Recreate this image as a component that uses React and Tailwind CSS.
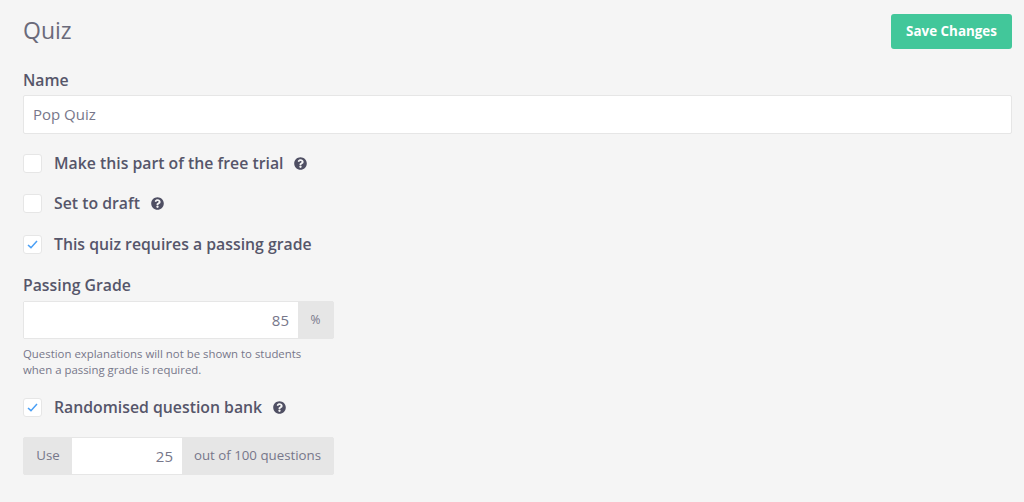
import React from "react";
import { FaQuestionCircle } from "react-icons/fa";

function Help({ className }) {
  return <FaQuestionCircle className={"w-[13px] h-[13px] text-[#4f4f63] " + className} />;
}

function Check({ checked, label, help, className }) {
  return (
    <div className={"flex items-center h-[19px] " + className}>
      <div className="w-[19px] h-[19px] bg-white border border-[#e6e6e6] rounded-[3px] flex items-center justify-center shrink-0">
        {checked && (
          <svg viewBox="0 0 12 10" className="w-[11px] h-[9px]" fill="none" stroke="#4a9ff5" strokeWidth="1.700">
            <path d="M1 5.500 L4.300 8.500 L11 1.200" />
          </svg>
        )}
      </div>
      <span className="ml-3 text-[15.800px] font-semibold text-[#56566a]">{label}</span>
      {help && <Help className="ml-[11px]" />}
    </div>
  );
}

export default function App() {
  return (
    <div className="w-[1024px] h-[502px] overflow-hidden bg-[#f5f5f5] pl-[23px] pr-3 pt-[14px] text-[#56566a] font-['Open_Sans','Noto_Sans',sans-serif]">
      <div className="flex justify-between items-start h-[35px]">
        <h1 className="text-[23px] leading-[32px] text-[#6a6a7a]">Quiz</h1>
        <button className="w-[121px] h-[35px] rounded-[3px] bg-[#42c79a] text-white text-[13.400px] font-bold">Save Changes</button>
      </div>
      <label className="block mt-[21px] text-[15.800px] leading-[20px] font-semibold">Name</label>
      <div className="mt-[5px] h-[39px] bg-white border border-[#e6e6e6] rounded-[2px] flex items-center px-[9px] text-[15px] text-[#77778a]">Pop Quiz</div>
      <Check className="mt-5" label="Make this part of the free trial" help />
      <Check className="mt-[21px]" label="Set to draft" help />
      <Check className="mt-[22px]" checked label="This quiz requires a passing grade" />
      <label className="block mt-[21px] text-[15.800px] leading-[20px] font-semibold">Passing Grade</label>
      <div className="mt-[6px] w-[311px] h-[38px] flex border border-[#e6e6e6] rounded-[2px] bg-[#e6e6e6]">
        <div className="flex-1 bg-white flex items-center justify-end pr-[9px] text-[15px] text-[#77778a]">85</div>
        <div className="w-[35px] flex items-center justify-center text-xs text-[#77778a]">%</div>
      </div>
      <p className="mt-[7px] text-[11.400px] leading-[16px] text-[#77778a]">Question explanations will not be shown to students<br />when a passing grade is required.</p>
      <Check className="mt-5" checked label="Randomised question bank" help />
      <div className="mt-5 w-[311px] h-[38px] flex border border-[#e6e6e6] rounded-[2px] bg-[#e6e6e6] text-[13.300px] text-[#77778a]">
        <div className="w-[48px] flex items-center justify-center">Use</div>
        <div className="w-[110px] bg-white flex items-center justify-end pr-[9px] text-[15px]">25</div>
        <div className="flex-1 flex items-center justify-center">out of 100 questions</div>
      </div>
    </div>
  );
}
